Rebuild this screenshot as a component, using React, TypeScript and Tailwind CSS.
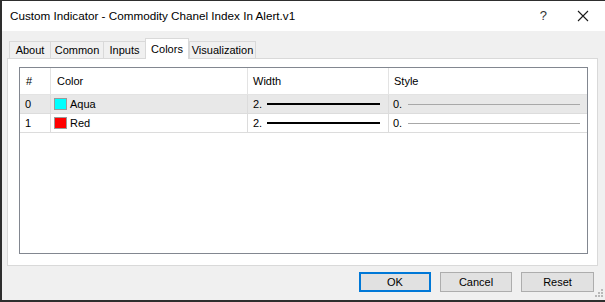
import { Fragment } from 'react';

const tabs = [
  { label: 'About', w: 'w-[41px]' },
  { label: 'Common', w: 'w-[53px]' },
  { label: 'Inputs', w: 'w-[42px]' },
  { label: 'Colors', w: 'w-[44px]', active: true },
  { label: 'Visualization', w: 'w-[67px]' },
];

const rows = [
  { idx: '0', name: 'Aqua', swatch: 'bg-[#00ffff]', selected: true },
  { idx: '1', name: 'Red', swatch: 'bg-[#ff0000]' },
];

function CloseIcon() {
  return (
    <svg width="12" height="12" viewBox="0 0 12 12" className="text-[#1a1a1a]">
      <path d="M1 1 L11 11 M11 1 L1 11" stroke="currentColor" strokeWidth="1.1" fill="none" />
    </svg>
  );
}

function Grip() {
  return (
    <svg width="8" height="8" viewBox="0 0 8 8" className="absolute right-[2px] bottom-[3px]">
      {[
        [6, 0],
        [6, 3],
        [3, 3],
        [6, 6],
        [3, 6],
        [0, 6],
      ].map(([x, y], i) => (
        <rect key={i} x={x} y={y} width="2" height="2" fill="#b8b8b8" />
      ))}
    </svg>
  );
}

export default function App() {
  return (
    <div
      className="relative w-[605px] h-[302px] bg-[#f0f0f0] border-l-2 border-t border-b-2 border-[#2e2e2e] flex flex-col text-[11px] text-black"
      style={{ fontFamily: '"Liberation Sans", Arial, sans-serif' }}
    >
      {/* title bar */}
      <div className="h-[30px] bg-white flex items-center pl-[8px] shrink-0">
        <span className="text-[11.7px]">Custom Indicator - Commodity Chanel Index In Alert.v1</span>
        <span className="ml-auto mr-[30px] text-[13px] text-[#333]">?</span>
        <div className="mr-[16px] flex items-center">
          <CloseIcon />
        </div>
      </div>

      {/* tabs */}
      <div className="flex items-end pt-[7px] pl-[7px] h-[27px] shrink-0">
        {tabs.map((t) => (
          <div
            key={t.label}
            className={
              t.active
                ? `${t.w} h-[21px] -mb-px relative z-10 bg-white border border-b-0 border-[#d9d9d9] flex items-start justify-center pt-[2px]`
                : `${t.w} h-[17px] bg-[#f0f0f0] border border-b-0 border-r-0 last:border-r border-[#d9d9d9] flex items-center justify-center`
            }
          >
            {t.label}
          </div>
        ))}
      </div>

      {/* panel */}
      <div className="ml-[5px] w-[591px] h-[208px] bg-white border border-[#d9d9d9] pt-[8px] pl-[11px] pr-[9px] pb-[11px] shrink-0">
        <div className="w-full h-full border border-[#828790] bg-white flex flex-col">
          <div className="flex h-[27px] border-b border-[#e3e3e3] shrink-0">
            <div className="w-[31px] border-r border-[#e3e3e3] flex items-center pl-[6px]">#</div>
            <div className="w-[197px] border-r border-[#e3e3e3] flex items-center pl-[6px]">Color</div>
            <div className="w-[141px] border-r border-[#e3e3e3] flex items-center pl-[5px]">Width</div>
            <div className="flex-1 flex items-center pl-[5px]">Style</div>
          </div>
          {rows.map((r) => (
            <Fragment key={r.idx}>
              <div
                className={`flex h-[19px] border-b border-[#dcdcdc] shrink-0 ${r.selected ? 'bg-[#e8e8e8]' : 'bg-white'}`}
              >
                <div className="w-[31px] border-r border-[#dcdcdc] flex items-center pl-[5px]">{r.idx}</div>
                <div className="w-[197px] border-r border-[#dcdcdc] flex items-center pl-[3px] gap-[3px]">
                  <span className={`w-[13px] h-[12px] border border-[#9a9a9a] ${r.swatch}`} />
                  <span>{r.name}</span>
                </div>
                <div className="w-[141px] border-r border-[#dcdcdc] flex items-center pl-[5px]">
                  <span>2.</span>
                  <span className="ml-[5px] w-[113px] h-[2px] bg-black" />
                </div>
                <div className="flex-1 flex items-center pl-[4px] pr-[7px]">
                  <span>0.</span>
                  <span className="ml-[6px] flex-1 h-px bg-[#a8a8a8]" />
                </div>
              </div>
            </Fragment>
          ))}
        </div>
      </div>

      {/* buttons */}
      <div className="flex justify-end gap-[9px] pr-[11px] pt-[6px]">
        <button className="w-[72px] h-[20px] bg-[#e1e1e1] border-2 border-[#0078d7] flex items-center justify-center">
          OK
        </button>
        <button className="w-[72px] h-[20px] bg-[#e1e1e1] border border-[#adadad] flex items-center justify-center">
          Cancel
        </button>
        <button className="w-[73px] h-[20px] bg-[#e1e1e1] border border-[#adadad] flex items-center justify-center">
          Reset
        </button>
      </div>
      <Grip />
    </div>
  );
}
